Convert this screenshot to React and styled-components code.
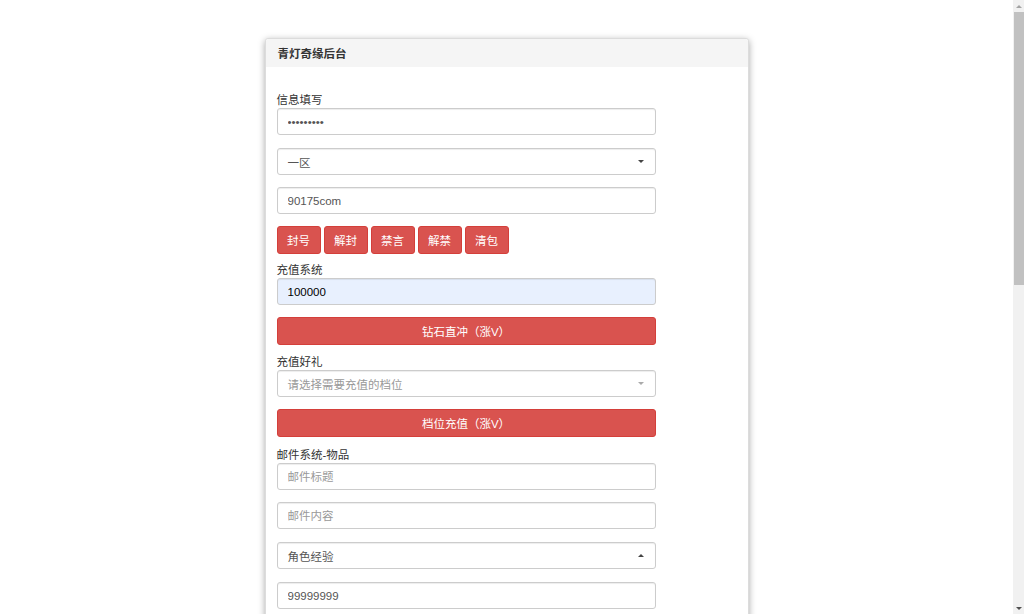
import React from "react";
import styled, { createGlobalStyle } from "styled-components";

const Global = createGlobalStyle`
  html, body { margin: 0; padding: 0; background: #fff; height: 100%; overflow: hidden; }
  #root { height: 100%; }
  body {
    font-family: "Liberation Sans", Arial, "Noto Sans CJK SC", sans-serif;
    font-size: 11.5px;
    color: #333;
  }
`;

const Viewport = styled.div`
  height: 100vh;
  display: flex;
`;

const Scroller = styled.div`
  flex: 1;
  min-width: 0;
  overflow-y: auto;
  scrollbar-width: none;
  &::-webkit-scrollbar { display: none; }
`;

const Rail = styled.div`
  width: 11px;
  flex: none;
  background: #f1f1f1;
  display: flex;
  flex-direction: column;
  align-items: stretch;
`;

const RailArrow = styled.div`
  height: 12px;
  flex: none;
  display: flex;
  align-items: center;
  justify-content: center;
  &::after {
    content: "";
    width: 0;
    height: 0;
    border-left: 3px solid transparent;
    border-right: 3px solid transparent;
    ${(p) =>
      p.$up
        ? "border-bottom: 3px solid #a3a3a3;"
        : "border-top: 3px solid #505050;"}
  }
`;

const RailTrack = styled.div`
  flex: 1;
  display: flex;
  flex-direction: column;
  padding-left: 1px;
`;

const RailThumb = styled.div`
  height: 273px;
  background: #c1c1c1;
`;

const Page = styled.div`
  padding: 38px 0 40px;
  display: flex;
  justify-content: center;
`;

const Card = styled.div`
  width: 484px;
  background: #fff;
  border: 1px solid #dcdcdc;
  border-radius: 3px;
  box-shadow: 0 2px 7px rgba(0, 0, 0, 0.35);
  box-sizing: border-box;
`;

const CardHeader = styled.div`
  height: 28px;
  background: #f5f5f5;
  display: flex;
  align-items: center;
  padding: 0 12px;
  font-weight: bold;
  font-size: 11.5px;
  color: #333;
  border-radius: 3px 3px 0 0;
`;

const CardBody = styled.div`
  padding: 26px 92px 30px 11px;
  display: flex;
  flex-direction: column;
`;

const Label = styled.label`
  display: block;
  line-height: 14px;
  height: 14px;
  margin-bottom: 1px;
  color: #333;
`;

const Input = styled.input`
  box-sizing: border-box;
  height: 27px;
  width: 100%;
  margin: 0 0 ${(p) => p.$mb ?? 13}px;
  padding: 0 10px;
  border: 1px solid #ccc;
  border-radius: 3px;
  box-shadow: inset 0 1px 1px rgba(0, 0, 0, 0.075);
  background: ${(p) => (p.$filled ? "#e8f0fe" : "#fff")};
  color: ${(p) => (p.$filled ? "#000" : "#555")};
  font-family: inherit;
  font-size: 11.5px;
  outline: none;
  &::placeholder { color: #999; }
`;

const SelectBox = styled.div`
  box-sizing: border-box;
  height: 27px;
  margin-bottom: ${(p) => p.$mb ?? 13}px;
  padding: 0 11px 0 10px;
  border: 1px solid #ccc;
  border-radius: 3px;
  box-shadow: inset 0 1px 1px rgba(0, 0, 0, 0.075);
  display: flex;
  align-items: center;
  justify-content: space-between;
  color: ${(p) => (p.$placeholder ? "#999" : "#555")};
`;

const Caret = styled.span`
  width: 0;
  height: 0;
  border-left: 3.5px solid transparent;
  border-right: 3.5px solid transparent;
  ${(p) =>
    p.$up
      ? "border-bottom: 3.5px solid #444;"
      : `border-top: 3.5px solid ${p.$light ? "#aaa" : "#444"};`}
`;

const BtnRow = styled.div`
  display: flex;
  gap: 3px;
  margin-bottom: ${(p) => p.$mb ?? 9}px;
`;

const SmallBtn = styled.button`
  box-sizing: border-box;
  width: ${(p) => p.$w ?? 44}px;
  height: 28px;
  padding: 0;
  background: #d9534f;
  border: 1px solid #d43f3a;
  border-radius: 3px;
  color: #fff;
  font-family: inherit;
  font-size: 11.5px;
`;

const BlockBtn = styled.button`
  box-sizing: border-box;
  width: 100%;
  height: 28px;
  margin-bottom: ${(p) => p.$mb ?? 10}px;
  background: #d9534f;
  border: 1px solid #d43f3a;
  border-radius: 3px;
  color: #fff;
  font-family: inherit;
  font-size: 11.5px;
`;

const Select = ({ text, placeholder, up, mb }) => (
  <SelectBox $placeholder={placeholder} $mb={mb}>
    <span>{text}</span>
    <Caret $up={up} $light={placeholder} />
  </SelectBox>
);

export default function App() {
  return (
    <>
      <Global />
      <Viewport>
        <Scroller>
          <Page>
            <Card>
              <CardHeader>青灯奇缘后台</CardHeader>
              <CardBody>
                <Label>信息填写</Label>
                <Input type="password" readOnly defaultValue="123456789" $mb={13} />
                <Select text="一区" mb={12} />
                <Input readOnly defaultValue="90175com" $mb={12} />
                <BtnRow>
                  {["封号", "解封", "禁言", "解禁", "清包"].map((t) => (
                    <SmallBtn key={t}>{t}</SmallBtn>
                  ))}
                </BtnRow>

                <Label>充值系统</Label>
                <Input readOnly defaultValue="100000" $filled $mb={12} />
                <BlockBtn $mb={10}>钻石直冲（涨V）</BlockBtn>

                <Label>充值好礼</Label>
                <Select text="请选择需要充值的档位" placeholder mb={12} />
                <BlockBtn $mb={11}>档位充值（涨V）</BlockBtn>

                <Label>邮件系统-物品</Label>
                <Input readOnly placeholder="邮件标题" $mb={12} />
                <Input readOnly placeholder="邮件内容" $mb={13} />
                <Select text="角色经验" up mb={13} />
                <Input readOnly defaultValue="99999999" $mb={12} />
                <BlockBtn $mb={10}>发送物品</BlockBtn>

                <Label>邮件系统-装备</Label>
                <Input readOnly placeholder="邮件标题" $mb={12} />
                <Input readOnly placeholder="邮件内容" $mb={13} />
                <Select text="请选择装备" placeholder mb={13} />
                <Input readOnly placeholder="装备数量" $mb={12} />
                <BlockBtn $mb={10}>发送装备</BlockBtn>

                <Label>角色属性</Label>
                <Select text="等级" mb={13} />
                <Input readOnly placeholder="请输入数值" $mb={12} />
                <BlockBtn $mb={10}>修改属性</BlockBtn>

                <Label>全服系统</Label>
                <Input readOnly placeholder="公告内容" $mb={12} />
                <BtnRow $mb={10}>
                  <SmallBtn>公告</SmallBtn>
                  <SmallBtn $w={68}>全服邮件</SmallBtn>
                  <SmallBtn>重载</SmallBtn>
                </BtnRow>

                <Label>管理员</Label>
                <Input readOnly placeholder="授权码" $mb={12} />
                <BlockBtn $mb={0}>授权</BlockBtn>
              </CardBody>
            </Card>
          </Page>
        </Scroller>
        <Rail>
          <RailArrow $up />
          <RailTrack>
            <RailThumb />
          </RailTrack>
          <RailArrow />
        </Rail>
      </Viewport>
    </>
  );
}
